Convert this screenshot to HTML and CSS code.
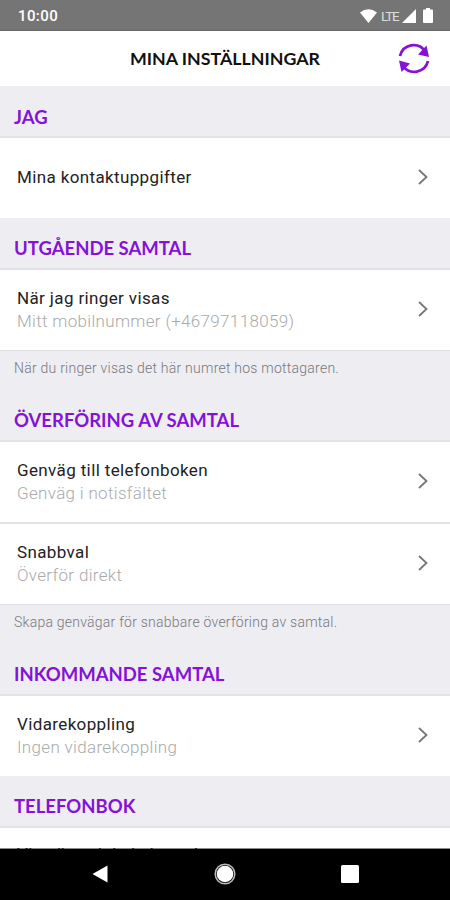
FILE: index.html
```html
<!DOCTYPE html>
<html lang="sv">
<head>
    <meta charset="UTF-8">
    <meta name="viewport" content="width=device-width, initial-scale=1.0">
    <title>Mina inställningar</title>
    <link rel="stylesheet" href="styles.css">
</head>
<body>
    <div class="status-bar">
        <span class="clock">10:00</span>
        <div class="status-icons">
            <svg class="wifi" width="17" height="14" viewBox="0 0 17 14"><path d="M0 3.600Q8.500-3 17 3.600L8.500 14Z" fill="#fff"/></svg>
            <span class="lte">LTE</span>
            <svg class="signal" width="14" height="14" viewBox="0 0 14 14"><path d="M14 0V14H0Z" fill="#fff"/></svg>
            <svg class="battery" width="10" height="15" viewBox="0 0 10 15"><path d="M3 0H7V1.500H9Q10 1.500 10 2.500V14Q10 15 9 15H1Q0 15 0 14V2.500Q0 1.500 1 1.500H3Z" fill="#fff"/></svg>
        </div>
    </div>

    <header class="header">
        <h1>MINA INSTÄLLNINGAR</h1>
        <button class="refresh" aria-label="Uppdatera">
            <svg width="32" height="32" viewBox="0 0 32 32">
                <g fill="none" stroke="#8512d6" stroke-width="2.800">
                    <path d="M2 13C5 1 20-1.500 27 8"/>
                    <path d="M30 18C27 30 12 32.500 5 23"/>
                </g>
                <path d="M28.500 2.500L31 14L20 11.500Z" fill="#8512d6"/>
                <path d="M3.500 29L1 17.500L12 20.500Z" fill="#8512d6"/>
            </svg>
        </button>
    </header>

    <main class="settings">
        <h2 class="first">JAG</h2>
        <a class="row">
            <div class="text"><p class="title">Mina kontaktuppgifter</p></div>
            <svg class="chevron" width="10" height="16" viewBox="0 0 10 16"><path d="M1 1L8.500 8L1 15"/></svg>
        </a>

        <h2>UTGÅENDE SAMTAL</h2>
        <a class="row">
            <div class="text">
                <p class="title">När jag ringer visas</p>
                <p class="value">Mitt mobilnummer (+46797118059)</p>
            </div>
            <svg class="chevron" width="10" height="16" viewBox="0 0 10 16"><path d="M1 1L8.500 8L1 15"/></svg>
        </a>
        <p class="note">När du ringer visas det här numret hos mottagaren.</p>

        <h2>ÖVERFÖRING AV SAMTAL</h2>
        <a class="row">
            <div class="text">
                <p class="title">Genväg till telefonboken</p>
                <p class="value">Genväg i notisfältet</p>
            </div>
            <svg class="chevron" width="10" height="16" viewBox="0 0 10 16"><path d="M1 1L8.500 8L1 15"/></svg>
        </a>
        <a class="row">
            <div class="text">
                <p class="title">Snabbval</p>
                <p class="value">Överför direkt</p>
            </div>
            <svg class="chevron" width="10" height="16" viewBox="0 0 10 16"><path d="M1 1L8.500 8L1 15"/></svg>
        </a>
        <p class="note">Skapa genvägar för snabbare överföring av samtal.</p>

        <h2>INKOMMANDE SAMTAL</h2>
        <a class="row">
            <div class="text">
                <p class="title">Vidarekoppling</p>
                <p class="value">Ingen vidarekoppling</p>
            </div>
            <svg class="chevron" width="10" height="16" viewBox="0 0 10 16"><path d="M1 1L8.500 8L1 15"/></svg>
        </a>

        <h2>TELEFONBOK</h2>
        <a class="row">
            <div class="text">
                <p class="title">Visa även lokala kontakter</p>
            </div>
        </a>
    </main>

    <nav class="nav-bar">
        <svg width="16" height="18" viewBox="0 0 16 18"><path d="M15.500 0.500V17.500L0.500 9Z" fill="#fff"/></svg>
        <svg width="22" height="22" viewBox="0 0 22 22"><circle cx="11" cy="11" r="9.800" fill="none" stroke="#bbb" stroke-width="1.500"/><circle cx="11" cy="11" r="8.300" fill="#fff"/></svg>
        <svg width="18" height="18" viewBox="0 0 18 18"><rect width="18" height="18" rx="1.500" fill="#fff"/></svg>
    </nav>
</body>
</html>
```
FILE: styles.css
```css
* {
    margin: 0;
    padding: 0;
    box-sizing: border-box;
}

body {
    font-family: Roboto, sans-serif;
    background: #fff;
    height: 900px;
    display: flex;
    flex-direction: column;
    overflow: hidden;
}

.status-bar {
    flex: none;
    height: 31px;
    padding: 1px 17px 0 18px;
    display: flex;
    align-items: center;
    justify-content: space-between;
    background: #757575;
    border-bottom: 1px solid #686868;
    color: #fff;
}

.clock {
    font-size: 15px;
    font-weight: 500;
    letter-spacing: 0.4px;
}

.status-icons {
    display: flex;
    align-items: center;
}

.lte {
    margin: 0 2px 0 4px;
    width: 19px;
    font-size: 13.5px;
    letter-spacing: -1.2px;
    color: #ddd;
}

.battery {
    margin-left: 7px;
}

.header {
    flex: none;
    height: 55px;
    display: grid;
    grid-template-columns: 64px 1fr 64px;
    align-items: center;
}

.header h1 {
    grid-column: 2;
    padding-bottom: 2px;
    text-align: center;
    font-family: Lato, sans-serif;
    font-size: 17.8px;
    font-weight: 700;
    color: #111;
}

.refresh {
    width: 32px;
    height: 32px;
    margin-left: 12px;
    border: none;
    background: none;
}

.settings {
    flex: 1;
    min-height: 0;
    overflow: hidden;
    background: #eeedf2;
}

h2 {
    height: 50px;
    padding: 18px 14px 0;
    font-family: Lato, sans-serif;
    font-size: 18.5px;
    line-height: 24px;
    font-weight: 700;
    color: #8512d6;
}

h2.first {
    padding-top: 19px;
}

.row {
    height: 82px;
    padding: 0 22px 2px 17px;
    display: flex;
    align-items: center;
    justify-content: space-between;
    background: #fff;
    border-top: 2px solid #e3e2e6;
}

.title {
    font-size: 17px;
    line-height: 24px;
    letter-spacing: 0.37px;
    color: #222;
}

.value {
    font-size: 17px;
    line-height: 23px;
    font-weight: 300;
    letter-spacing: 0.33px;
    color: #aaa;
}

.note {
    height: 40px;
    padding: 7px 14px 0;
    border-top: 1px solid #e0dfe3;
    font-size: 14px;
    line-height: 20px;
    font-weight: 300;
    letter-spacing: 0.24px;
    color: #77777c;
}

.chevron {
    flex: none;
    fill: none;
    stroke: #777;
    stroke-width: 1.8;
}

.row:last-child {
    align-items: flex-start;
    padding-top: 14px;
}

.nav-bar {
    flex: none;
    height: 51px;
    padding: 0 91px 1px 92px;
    display: flex;
    align-items: center;
    justify-content: space-between;
    background: #000;
    box-shadow: 0 -1px 0 rgba(0, 0, 0, 0.45);
}
```
